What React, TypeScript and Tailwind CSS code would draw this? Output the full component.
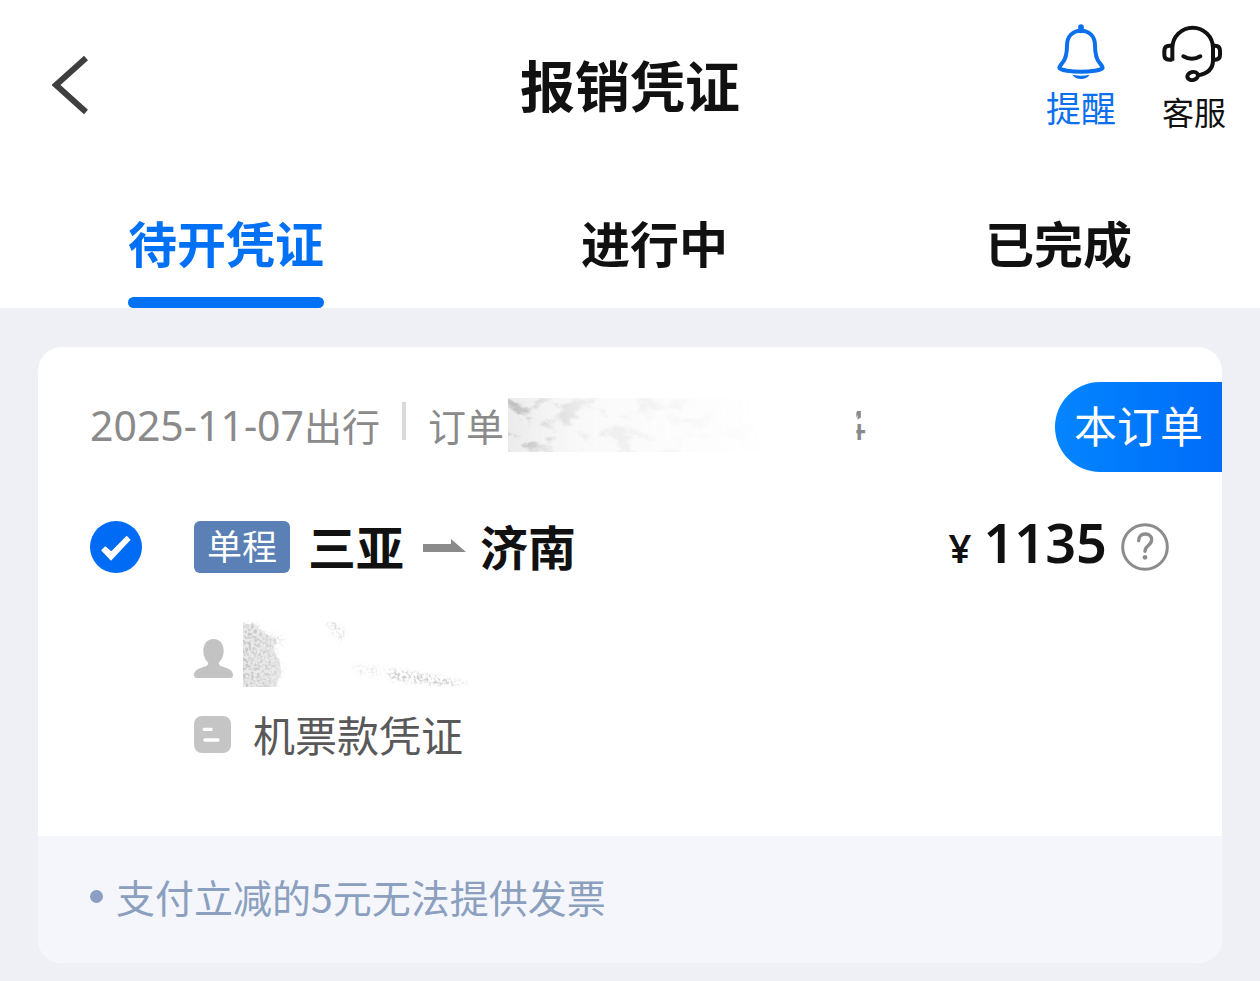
import { useState } from "react";

const tabs = ["待开凭证", "进行中", "已完成"];

function BackIcon() {
  return (
    <svg className="h-[60px] w-[36px]" viewBox="0 0 36 60" fill="none" stroke="#3f3f3f" strokeWidth="6" aria-hidden="true">
      <path d="M34 2 4 29 34 56" />
    </svg>
  );
}

function BellIcon() {
  return (
    <svg className="h-[56px] w-[48px]" viewBox="0 0 144 168" fill="none" stroke="#0c70ee" strokeWidth="12" aria-hidden="true">
      <path d="M72 20C46 20 30 38 30 64c0 28-4 42-14 53-5 6-9 10-9 14 0 8 40 12 65 12s65-4 65-12c0-4-4-8-9-14-10-11-14-25-14-53 0-26-16-44-42-44Z" />
      <path d="M72 9v10" strokeWidth="17" strokeLinecap="round" />
      <path d="M46 152c17 4 35 4 52 0-6 9-15 13-26 13s-20-4-26-13Z" fill="#0c70ee" stroke="none" />
    </svg>
  );
}

function HeadsetIcon() {
  return (
    <svg className="h-[58px] w-[64px]" viewBox="0 0 192 174" fill="none" stroke="#111" strokeWidth="12" aria-hidden="true">
      <path d="M31 110V72a61 61 0 0 1 122 0v36c0 26-17 42-46 46" />
      <path d="M31 65h-9C12 65 7 71 7 81v11c0 10 5 15 15 15h9M153 65h6c10 0 15 6 15 16v11c0 10-5 15-15 15h-6" />
      <path d="M64 97c17 10 34 10 51 0" strokeLinecap="round" />
      <ellipse cx="92" cy="156" rx="16" ry="12" transform="rotate(-15 92 156)" />
    </svg>
  );
}

function ArrowIcon() {
  return (
    <svg className="mr-[14px] ml-[19px] h-[13px] w-[43px]" viewBox="0 0 43 13" aria-hidden="true">
      <path d="M0 5h28V0l15 13H0Z" fill="#8b8b8b" />
    </svg>
  );
}

function HelpIcon() {
  return (
    <svg className="size-12" viewBox="0 0 144 144" fill="none" stroke="#8c8c8c" aria-hidden="true">
      <circle cx="72" cy="72" r="67" strokeWidth="9" />
      <path d="M53 53c0-13 8-20 20-20 11 0 19 7 19 17 0 9-5 13-11 18-6 5-9 9-9 17" strokeWidth="10" strokeLinecap="round" />
      <circle cx="72" cy="103" r="7" fill="#8c8c8c" stroke="none" />
    </svg>
  );
}

function PersonIcon() {
  return (
    <svg className="mt-2 size-[39px]" viewBox="0 0 117 117" fill="#c3c3c3" aria-hidden="true">
      <path d="M59 0C39 0 28 16 28 36c0 16 7 27 14 34 2 3 0 8-5 11C25 86 0 90 0 107c0 6 2 10 8 10h101c6 0 8-4 8-10 0-17-25-21-37-26-5-3-7-8-5-11 7-7 14-18 14-34C89 16 78 0 59 0Z" />
    </svg>
  );
}

function VoucherIcon() {
  return (
    <svg className="size-[37px]" viewBox="0 0 108 108" aria-hidden="true">
      <rect width="108" height="108" rx="23" fill="#c5c5c5" />
      <path d="M30 39h20M32 70h38" stroke="#fff" strokeWidth="10" strokeLinecap="round" />
    </svg>
  );
}

function OrderSmudge() {
  return (
    <svg className="h-[54px] w-[345px]" viewBox="0 0 345 54" aria-hidden="true">
      <defs>
        <filter id="order-grain" x="0" y="0" width="1" height="1">
          <feTurbulence type="fractalNoise" baseFrequency="0.04 0.07" numOctaves="6" seed="12" />
          <feColorMatrix values="0 0 0 0 .5  0 0 0 0 .5  0 0 0 0 .51  5 0 0 0 -2.6" />
        </filter>
        <linearGradient id="order-fade">
          <stop offset="0" stopColor="#fff" />
          <stop offset=".1" stopColor="#999" />
          <stop offset=".2" stopColor="#505050" />
          <stop offset=".45" stopColor="#262626" />
          <stop offset=".75" stopColor="#000" />
        </linearGradient>
        <mask id="order-mask">
          <rect width="345" height="54" fill="url(#order-fade)" />
        </mask>
      </defs>
      <g mask="url(#order-mask)">
        <rect width="345" height="54" fill="#ccc" opacity=".4" />
        <rect width="345" height="54" filter="url(#order-grain)" />
      </g>
    </svg>
  );
}

function NameSmudge() {
  return (
    <svg className="h-[65px] w-[228px]" viewBox="0 0 228 65" aria-hidden="true">
      <defs>
        <filter id="name-grain" x="0" y="0" width="228" height="65" filterUnits="userSpaceOnUse">
          <feTurbulence type="fractalNoise" baseFrequency="0.35" numOctaves="3" seed="4" result="noise" />
          <feColorMatrix in="noise" values="0 0 0 0 .5  0 0 0 0 .5  0 0 0 0 .51  4 0 0 0 -1.7" result="grain" />
          <feGaussianBlur in="SourceGraphic" stdDeviation="2" result="shape" />
          <feComposite in="grain" in2="shape" operator="in" />
        </filter>
        <linearGradient id="name-fade" gradientUnits="userSpaceOnUse" x1="0" x2="42">
          <stop offset="0" stopOpacity=".8" />
          <stop offset="1" stopOpacity=".3" />
        </linearGradient>
      </defs>
      <path d="M0 2 12 2 19 10 34 17 30 26 37 40 38 52 32 65 0 65Z" fill="#bbb" opacity=".3" />
      <g filter="url(#name-grain)">
        <path d="M-6 0 14 2 19 10 42 15 42 22 30 26 37 36 40 50 32 70-6 70Z" fill="url(#name-fade)" />
        <path d="M82-2h9l12 12-4 9-9-7Z" opacity=".5" />
        <path d="M106 43 137 45 136 54 116 52Z" opacity=".35" />
        <path d="M142 47 182 52 228 62 200 64 148 58Z" opacity=".75" />
      </g>
    </svg>
  );
}

export default function App() {
  const [active, setActive] = useState(0);
  const [selected, setSelected] = useState(true);

  return (
    <div className="min-h-screen bg-[#eef0f5] pb-[18px] font-['Noto_Sans_CJK_SC','Noto_Sans',sans-serif] text-[#111]">
      <header className="grid h-[172px] grid-cols-[1fr_auto_1fr] items-center bg-white">
        <div className="flex pl-[52px]">
          <button type="button" aria-label="返回">
            <BackIcon />
          </button>
        </div>
        <h1 className="pb-1.5 text-[55px] leading-[64px] font-bold">报销凭证</h1>
        <div className="flex items-start justify-end gap-[46px] self-start pt-6 pr-[34px]">
          <button type="button" className="flex flex-col items-center gap-1 text-[35px] leading-[46px] text-[#0c70ee]">
            <BellIcon />
            提醒
          </button>
          <button type="button" className="flex flex-col items-center gap-1 text-[32px] leading-[50px]">
            <HeadsetIcon />
            客服
          </button>
        </div>
      </header>

      <nav role="tablist" className="flex h-[136px] items-end justify-between bg-white px-32">
        {tabs.map((tab, i) => (
          <button
            key={tab}
            type="button"
            role="tab"
            aria-selected={active === i}
            onClick={() => setActive(i)}
            className={
              active === i
                ? "flex flex-col gap-[25px] text-[49px] leading-[60px] font-bold text-[#0070f5]"
                : "flex flex-col gap-[25px] text-[49px] leading-[60px] font-bold"
            }
          >
            {tab}
            <span className={active === i ? "h-[11px] w-full rounded-full bg-[#0070f5]" : "h-[11px] w-full"} />
          </button>
        ))}
      </nav>

      <main className="px-[38px] pt-[39px]">
        <article className="overflow-hidden rounded-[24px] bg-white">
          <div className="pt-[35px] pb-[72px]">
            <div className="flex items-center justify-between pl-[52px]">
              <p className="flex items-center pb-1 text-[38px] leading-[54px] text-[#8a8a8a]">
                <span className="font-['Noto_Sans'] text-[41px]">2025-11-07</span>
                <span>出行</span>
                <span className="mx-[22px] mt-1 h-[38px] w-1 self-start bg-[#dadada]" />
                <span className="mr-1">订单</span>
                <OrderSmudge />
                <span className="-ml-[10px] font-['Noto_Sans'] text-[40px] [clip-path:polygon(58%_0,78%_0,78%_36%,58%_41%,58%_48%,100%_48%,100%_100%,58%_100%)]">
                  4
                </span>
              </p>
              <span className="rounded-l-full bg-linear-to-r from-[#0585ff] to-[#006cf8] px-[19px] pb-1.5 text-[43px] leading-[84px] text-white">
                本订单
              </span>
            </div>

            <div className="mt-[45px] flex h-[60px] items-center pr-[53px] pl-[52px]">
              <label className="grid size-[52px] place-items-center">
                <input
                  type="checkbox"
                  aria-label="选择单程 三亚至济南"
                  checked={selected}
                  onChange={() => setSelected(!selected)}
                  className="col-start-1 row-start-1 size-[52px] appearance-none rounded-full border-2 border-[#bbb] checked:border-0 checked:bg-[#006cf6]"
                />
                <svg className="pointer-events-none col-start-1 row-start-1 size-[52px]" viewBox="0 0 156 156" aria-hidden="true">
                  <path d="M33 88 46 76 64 91 110 44 122 56 63 119Z" fill="#fff" />
                </svg>
              </label>
              <span className="ml-[52px] rounded-md bg-[#5a80b5] px-[13px] pb-1 text-[35px] leading-[48px] text-white">单程</span>
              <h2 className="ml-[18px] flex items-center pb-1 text-[48px] leading-[60px] font-bold">
                三亚
                <ArrowIcon />
                济南
              </h2>
              <p className="ml-auto flex items-baseline gap-3 pb-1 font-['Noto_Sans'] leading-[60px] font-semibold">
                <span className="text-[40px]">¥</span>
                <span className="text-[54px]">1135</span>
              </p>
              <button type="button" aria-label="价格说明" className="ml-[14px]">
                <HelpIcon />
              </button>
            </div>

            <div className="mt-[45px] flex h-[65px] items-center pl-[156px]">
              <PersonIcon />
              <span className="ml-[10px]">
                <NameSmudge />
              </span>
            </div>

            <div className="mt-[17px] flex items-center gap-[22px] pl-[156px] text-[42px] leading-[60px] text-[#595959]">
              <VoucherIcon />
              机票款凭证
            </div>
          </div>

          <footer className="flex items-center gap-[13px] bg-[#f4f6fb] pt-[31px] pb-[37px] pl-[52px] text-[39px] leading-[59px] text-[#8b9fbe]">
            <span className="size-[13px] rounded-full bg-[#8b9fc4]" />
            支付立减的5元无法提供发票
          </footer>
        </article>
      </main>
    </div>
  );
}
